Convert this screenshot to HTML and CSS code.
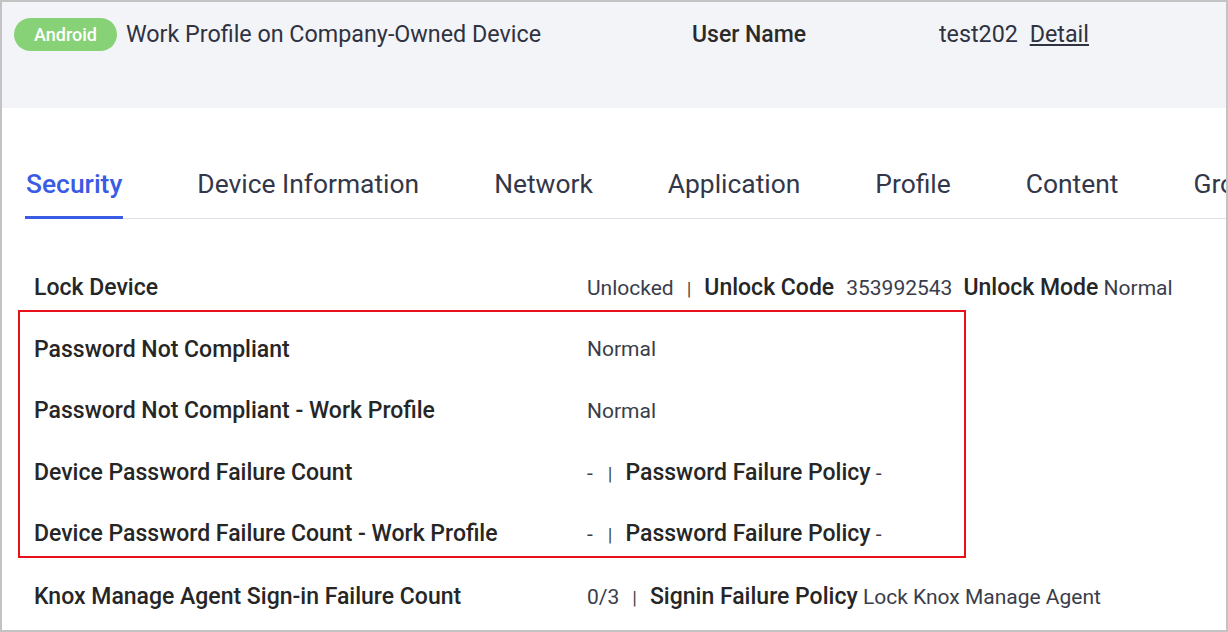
FILE: index.html
```html
<!DOCTYPE html>
<html lang="en">
<head>
<meta charset="utf-8">
<title>Device Security</title>
<link rel="stylesheet" href="styles.css">
</head>
<body>
<div class="frame">
  <header class="device-header">
    <div class="device-type">
      <span class="badge">Android</span>
      <span class="mode">Work Profile on Company-Owned Device</span>
    </div>
    <div class="user-label">User Name</div>
    <div class="user-value">test202 <a class="detail" href="#">Detail</a></div>
  </header>

  <nav class="tabs">
    <span class="tab active">Security</span>
    <span class="tab">Device Information</span>
    <span class="tab">Network</span>
    <span class="tab">Application</span>
    <span class="tab">Profile</span>
    <span class="tab">Content</span>
    <span class="tab">Group</span>
  </nav>

  <section class="rows">
    <div class="row first">
      <div class="label">Lock Device</div>
      <div class="value">Unlocked<span class="sep">|</span><b>Unlock Code</b><span class="num">353992543</span><b>Unlock Mode</b> Normal</div>
    </div>
    <div class="highlight">
      <div class="row">
        <div class="label">Password Not Compliant</div>
        <div class="value">Normal</div>
      </div>
      <div class="row">
        <div class="label">Password Not Compliant - Work Profile</div>
        <div class="value">Normal</div>
      </div>
      <div class="row">
        <div class="label">Device Password Failure Count</div>
        <div class="value">-<span class="sep wide">|</span><b>Password Failure Policy</b> -</div>
      </div>
      <div class="row">
        <div class="label">Device Password Failure Count - Work Profile</div>
        <div class="value">-<span class="sep wide">|</span><b>Password Failure Policy</b> -</div>
      </div>
    </div>
    <div class="row last">
      <div class="label">Knox Manage Agent Sign-in Failure Count</div>
      <div class="value">0/3<span class="sep">|</span><b>Signin Failure Policy</b> Lock Knox Manage Agent</div>
    </div>
  </section>
</div>
</body>
</html>
```

FILE: styles.css
```css
* { box-sizing: border-box; }
html, body { margin: 0; padding: 0; background: #fff; }
body { font-family: Roboto, "Noto Sans", sans-serif; color: #2e2e2e; }

.frame {
  width: 1228px;
  height: 632px;
  border: 2px solid #c3c3c3;
  overflow: hidden;
  position: relative;
}

.device-header {
  height: 106px;
  background: #f3f4f8;
  padding: 16px 0 0 12px;
  display: grid;
  grid-template-columns: 678px 247px auto;
  align-items: start;
}
.device-type { display: flex; align-items: center; gap: 9px; }
.badge {
  display: inline-flex;
  align-items: center;
  justify-content: center;
  width: 103px;
  height: 33px;
  border-radius: 17px;
  background: #87d277;
  color: #fff;
  font-weight: 500;
  font-size: 18px;
}
.mode, .user-label, .user-value { font-size: 23.3px; line-height: 33px; }
.mode { color: #2f3240; }
.user-label { font-weight: 500; color: #2a2a2a; font-size: 23px; }
.user-value { color: #2f3240; }
.detail { color: #2f3240; text-decoration: underline; margin-left: 6px; }

.tabs {
  display: flex;
  gap: 73px;
  margin: 61px 0 0 23px;
  border-bottom: 1px solid #dfe2ea;
  white-space: nowrap;
}
.tab {
  font-size: 26.4px;
  line-height: 31px;
  padding: 0 1px 16px;
  color: #33374a;
  border-bottom: 3px solid transparent;
  margin-bottom: -1px;
}
.tab.active { color: #3a5be3; font-weight: 500; border-bottom-color: #3a5be3; }

.rows { padding: 56px 0 0 32px; }
.row { display: flex; align-items: center; height: 24px; }
.label { width: 553px; flex: none; font-size: 23px; font-weight: 500; color: #262626; }
.value { font-size: 21px; color: #3a3d4a; white-space: nowrap; }
.value b { font-size: 23px; font-weight: 500; color: #262626; }
.sep { color: #4a4a4a; margin: 0 13px 0 13px; font-size: 19px; }
.sep.wide { margin: 0 13px 0 15px; }
.num { margin: 0 11px 0 12px; }

.row.first { margin-bottom: 11px; }
.highlight {
  width: 948px;
  margin-left: -16px;
  padding: 25px 0 10px 14px;
  border: 2px solid #e8111b;
  display: flex;
  flex-direction: column;
  gap: 37.6px;
}
.row.last { margin-top: 27px; }
```
